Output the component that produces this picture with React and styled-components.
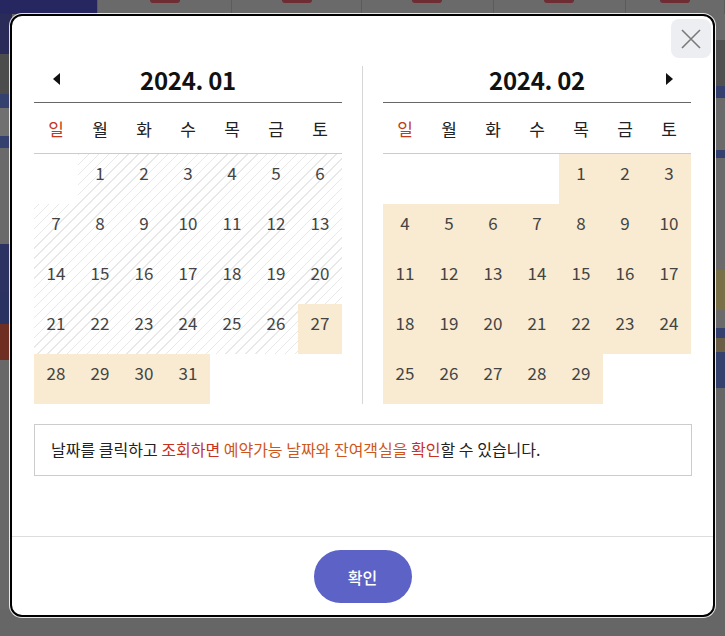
import React from "react";
import styled, { createGlobalStyle } from "styled-components";

const GlobalStyle = createGlobalStyle`
    html, body {
        margin: 0;
        padding: 0;
    }
    body {
        font-family: "Noto Sans CJK KR", "Noto Sans", sans-serif;
    }
`;

const Page = styled.div`
    width: 725px;
    height: 636px;
    position: relative;
    overflow: hidden;
    background-color: #666666;
`;

const TopStrip = styled.div`
    display: flex;
    height: 14px;
`;

const TopCell = styled.div`
    width: ${(p) => p.$w}px;
    background-color: ${(p) => p.$c || "#6a6a6a"};
    border-right: 1px solid #5c5c5c;
    display: flex;
    justify-content: center;
`;

const RedBlob = styled.span`
    width: 30px;
    height: 3px;
    border-radius: 0 0 8px 8px;
    background-color: #6e2c33;
`;

const SideStrip = styled.div`
    position: absolute;
    top: 14px;
    ${(p) => (p.$right ? "right: 0;" : "left: 0;")}
    width: 12px;
    display: flex;
    flex-direction: column;
`;

const Segment = styled.div`
    height: ${(p) => p.$h}px;
    background-color: ${(p) => p.$c};
`;

const Modal = styled.div`
    position: absolute;
    left: 10px;
    top: 14px;
    width: 701px;
    display: flex;
    flex-direction: column;
    background-color: #fff;
    border: 2px solid #000;
    border-radius: 12px;
    box-shadow: 0 0 0 1px rgba(255, 255, 255, 0.85);
`;

const CloseButton = styled.button`
    position: absolute;
    top: 3px;
    right: 2px;
    width: 40px;
    height: 39px;
    border: none;
    border-radius: 8px;
    background-color: #eceef1;
    display: flex;
    align-items: center;
    justify-content: center;
    padding: 0;
    cursor: pointer;
`;

const Body = styled.div`
    padding: 50px 21px 60px 22px;
    display: flex;
    flex-direction: column;
`;

const CalendarRow = styled.div`
    display: flex;
    align-items: stretch;
`;

const Divider = styled.div`
    width: 1px;
    background-color: #d6d6d6;
    margin: 0 20px;
`;

const Month = styled.div`
    width: 308px;
    display: flex;
    flex-direction: column;
`;

const MonthHeader = styled.div`
    height: 37px;
    display: grid;
    grid-template-columns: 44px 1fr 44px;
    align-items: start;
    border-bottom: 1px solid #666;
    box-sizing: border-box;
`;

const MonthTitle = styled.h2`
    margin: 0;
    text-align: center;
    font-size: 24px;
    line-height: 28px;
    font-weight: 700;
    color: #111;
    letter-spacing: -0.3px;
`;

const Arrow = styled.span`
    justify-self: center;
    margin-top: 7px;
    width: 0;
    height: 0;
    border-top: 6px solid transparent;
    border-bottom: 6px solid transparent;
    ${(p) =>
        p.$dir === "left"
            ? "border-right: 7px solid #111;"
            : "border-left: 7px solid #111;"}
`;

const WeekRow = styled.div`
    display: grid;
    grid-template-columns: repeat(7, 44px);
    height: 50px;
    align-items: center;
    border-bottom: 1px solid #cccccc;
`;

const WeekDay = styled.span`
    text-align: center;
    font-size: 17px;
    color: ${(p) => (p.$sun ? "#c4381b" : "#222")};
`;

const DayGrid = styled.div`
    display: grid;
    grid-template-columns: repeat(7, 44px);
    grid-auto-rows: 50px;
`;

const Day = styled.div`
    display: flex;
    align-items: center;
    justify-content: center;
    padding-bottom: 13px;
    box-sizing: border-box;
    font-size: 17px;
    color: #444;
    background: ${(p) =>
        p.$state === "open"
            ? "#f8ebd2"
            : p.$state === "closed"
            ? "repeating-linear-gradient(-45deg, #ffffff 0px, #ffffff 6px, #e8e8e8 6px, #e8e8e8 7px)"
            : "transparent"};
    background-attachment: ${(p) => (p.$state === "closed" ? "fixed" : "scroll")};
`;

const InfoBox = styled.div`
    margin-top: 20px;
    height: 52px;
    box-sizing: border-box;
    border: 1px solid #cccccc;
    display: flex;
    align-items: center;
    padding: 0 0 2px 16px;
`;

const Message = styled.p`
    margin: 0;
    font-size: 16px;
    color: #222;
`;

const Highlight = styled.span`
    color: ${(p) => p.$c};
`;

const Footer = styled.div`
    border-top: 1px solid #dddddd;
    padding: 13px 0 12px;
    display: flex;
    justify-content: center;
`;

const ConfirmButton = styled.button`
    width: 98px;
    height: 53px;
    border: none;
    border-radius: 27px;
    background-color: #5c62c6;
    color: #fff;
    font-family: "Noto Sans CJK KR", sans-serif;
    font-size: 16px;
    font-weight: 500;
    cursor: pointer;
`;

const weekDays = ["일", "월", "화", "수", "목", "금", "토"];

const months = [
    { title: "2024. 01", offset: 1, days: 31, openFrom: 27, arrow: "left" },
    { title: "2024. 02", offset: 4, days: 29, openFrom: 1, arrow: "right" },
];

function buildCells(m) {
    const cells = [];
    for (let i = 0; i < m.offset; i++) cells.push({ key: "e" + i, state: "empty" });
    for (let d = 1; d <= m.days; d++) {
        cells.push({ key: "d" + d, label: d, state: d >= m.openFrom ? "open" : "closed" });
    }
    while (cells.length % 7 !== 0) cells.push({ key: "t" + cells.length, state: "empty" });
    return cells;
}

function Calendar({ month }) {
    return (
        <Month>
            <MonthHeader>
                {month.arrow === "left" ? <Arrow $dir="left" /> : <span />}
                <MonthTitle>{month.title}</MonthTitle>
                {month.arrow === "right" ? <Arrow $dir="right" /> : <span />}
            </MonthHeader>
            <WeekRow>
                {weekDays.map((w, i) => (
                    <WeekDay key={w} $sun={i === 0}>
                        {w}
                    </WeekDay>
                ))}
            </WeekRow>
            <DayGrid>
                {buildCells(month).map((c) => (
                    <Day key={c.key} $state={c.state}>
                        {c.label}
                    </Day>
                ))}
            </DayGrid>
        </Month>
    );
}

const leftSegments = [
    ["#2b2b5a", 40], ["#4c4c4c", 40], ["#34406e", 14], ["#707070", 28], ["#34406e", 12],
    ["#6a6a6a", 96], ["#2c3362", 48], ["#2a3262", 32], ["#6e2e22", 36], ["#686868", 250],
];

const rightSegments = [
    ["#6a6a6a", 26], ["#505050", 46], ["#34406e", 12], ["#6a6a6a", 52], ["#34406e", 8],
    ["#6a6a6a", 112], ["#7a7048", 40], ["#6a6a6a", 18], ["#34406e", 10], ["#6a5e46", 14],
    ["#34406e", 36], ["#666666", 250],
];

export default function App() {
    return (
        <Page>
            <GlobalStyle />
            <TopStrip>
                <TopCell $w={98} $c="#262660" />
                <TopCell $w={134}><RedBlob /></TopCell>
                <TopCell $w={130}><RedBlob /></TopCell>
                <TopCell $w={132}><RedBlob /></TopCell>
                <TopCell $w={132}><RedBlob /></TopCell>
                <TopCell $w={99}><RedBlob /></TopCell>
            </TopStrip>
            <SideStrip>
                {leftSegments.map(([c, h], i) => (
                    <Segment key={i} $c={c} $h={h} />
                ))}
            </SideStrip>
            <SideStrip $right>
                {rightSegments.map(([c, h], i) => (
                    <Segment key={i} $c={c} $h={h} />
                ))}
            </SideStrip>
            <Modal>
                <CloseButton aria-label="닫기">
                    <svg width="20" height="20" viewBox="0 0 20 20">
                        <path d="M1 1 L19 19 M19 1 L1 19" stroke="#7a7a7a" strokeWidth="1.6" fill="none" />
                    </svg>
                </CloseButton>
                <Body>
                    <CalendarRow>
                        <Calendar month={months[0]} />
                        <Divider />
                        <Calendar month={months[1]} />
                    </CalendarRow>
                    <InfoBox>
                        <Message>
                            날짜를 클릭하고 <Highlight $c="#c6321f">조회하면</Highlight>{" "}
                            <Highlight $c="#cf561b">예약가능 날짜와 잔여객실을</Highlight>{" "}
                            <Highlight $c="#c8321f">확인</Highlight>할 수 있습니다.
                        </Message>
                    </InfoBox>
                </Body>
                <Footer>
                    <ConfirmButton>확인</ConfirmButton>
                </Footer>
            </Modal>
        </Page>
    );
}
